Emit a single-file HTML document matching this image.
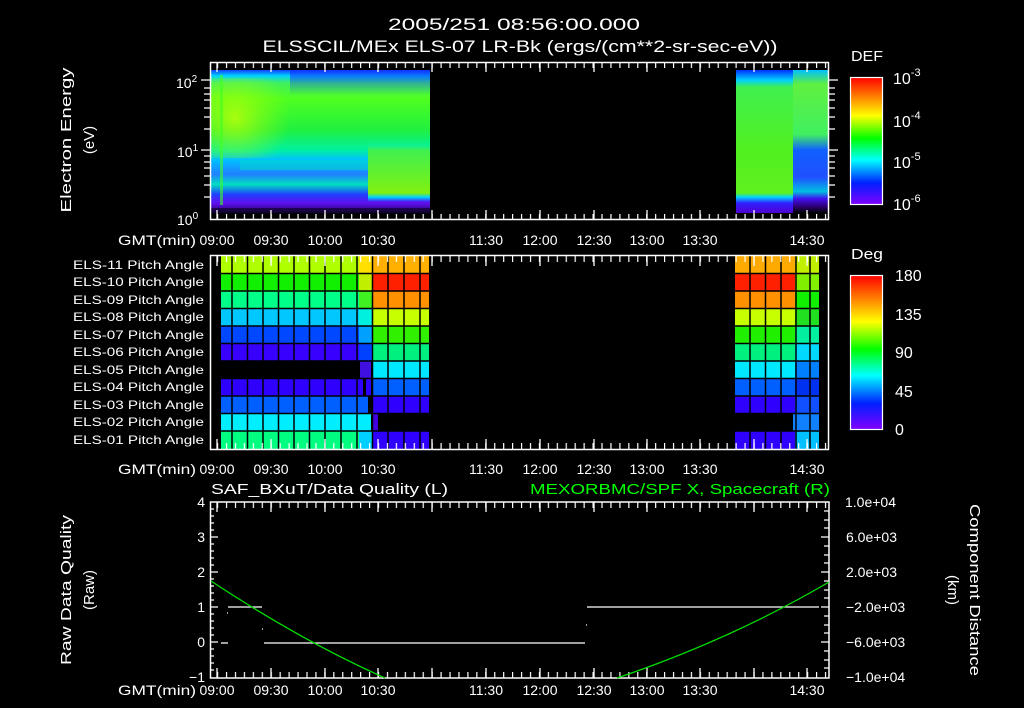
<!DOCTYPE html>
<html><head><meta charset="utf-8"><style>
html,body{margin:0;padding:0;background:#000;}
svg{display:block}
text{font-family:"Liberation Sans",sans-serif;fill:#fff;}
</style></head><body>
<svg width="1024" height="708" viewBox="0 0 1024 708" xmlns="http://www.w3.org/2000/svg">
<defs>
<linearGradient id="cb" x1="0" y1="0" x2="0" y2="1">
<stop offset="0" stop-color="#ff0000"/><stop offset="0.15" stop-color="#ff8000"/><stop offset="0.3" stop-color="#ffff00"/><stop offset="0.48" stop-color="#00ff00"/><stop offset="0.65" stop-color="#00ffff"/><stop offset="0.83" stop-color="#0020ff"/><stop offset="1" stop-color="#8000ff"/>
</linearGradient>
<linearGradient id="sl" x1="0" y1="70" x2="0" y2="213" gradientUnits="userSpaceOnUse">
<stop offset="0" stop-color="#1040ff"/><stop offset="0.04" stop-color="#00d0ff"/><stop offset="0.09" stop-color="#40f060"/><stop offset="0.2" stop-color="#50ff20"/><stop offset="0.42" stop-color="#20f040"/><stop offset="0.56" stop-color="#00f0a0"/><stop offset="0.63" stop-color="#00c0ff"/><stop offset="0.73" stop-color="#2080ff"/><stop offset="0.8" stop-color="#00e0c0"/><stop offset="0.87" stop-color="#2040ff"/><stop offset="0.93" stop-color="#6010f0"/><stop offset="1" stop-color="#200060"/>
</linearGradient>
<linearGradient id="gr" x1="0" y1="70" x2="0" y2="213" gradientUnits="userSpaceOnUse">
<stop offset="0" stop-color="#0030ff"/><stop offset="0.07" stop-color="#00d0ff"/><stop offset="0.12" stop-color="#40f050"/><stop offset="0.55" stop-color="#50f020"/><stop offset="0.86" stop-color="#60f020"/><stop offset="0.89" stop-color="#00d0ff"/><stop offset="0.93" stop-color="#3020ff"/><stop offset="1" stop-color="#5000d0"/>
</linearGradient>
<linearGradient id="gr2" x1="0" y1="70" x2="0" y2="213" gradientUnits="userSpaceOnUse">
<stop offset="0" stop-color="#00c0ff"/><stop offset="0.1" stop-color="#60f040"/><stop offset="0.45" stop-color="#40f060"/><stop offset="0.56" stop-color="#1060ff"/><stop offset="0.75" stop-color="#2050ff"/><stop offset="0.85" stop-color="#00c0e0"/><stop offset="0.9" stop-color="#4010f0"/><stop offset="0.95" stop-color="#300080"/><stop offset="1" stop-color="#000"/>
</linearGradient>
<linearGradient id="mid" x1="0" y1="70" x2="0" y2="213" gradientUnits="userSpaceOnUse">
<stop offset="0.5" stop-color="#00f0c0" stop-opacity="0"/><stop offset="0.56" stop-color="#40f050"/><stop offset="0.86" stop-color="#80f010"/><stop offset="0.89" stop-color="#00d0ff"/><stop offset="0.92" stop-color="#00d0ff" stop-opacity="0"/>
</linearGradient>
<linearGradient id="midh" x1="0" y1="0" x2="1" y2="0">
<stop offset="0" stop-color="#fff" stop-opacity="0"/><stop offset="0.25" stop-color="#fff" stop-opacity="1"/>
</linearGradient>
<radialGradient id="yl" cx="0.3" cy="0.5" r="0.7">
<stop offset="0" stop-color="#d0ff00" stop-opacity="0.75"/><stop offset="1" stop-color="#a0ff00" stop-opacity="0"/>
</radialGradient>
<linearGradient id="tb" x1="0" y1="0" x2="0" y2="1">
<stop offset="0" stop-color="#1030ff" stop-opacity="0.7"/><stop offset="1" stop-color="#1030ff" stop-opacity="0"/>
</linearGradient>
<pattern id="tx" patternUnits="userSpaceOnUse" x="217" y="0" width="8.94" height="708"><rect x="0" y="0" width="1.2" height="708" fill="#fff"/></pattern>
</defs>

<text x="514" y="30" font-size="17" text-anchor="middle" textLength="252" lengthAdjust="spacingAndGlyphs">2005/251 08:56:00.000</text>
<text x="520" y="52" font-size="17" text-anchor="middle" textLength="515" lengthAdjust="spacingAndGlyphs">ELSSCIL/MEx ELS-07 LR-Bk  (ergs/(cm**2-sr-sec-eV))</text>

<!-- PANEL 1 -->
<rect x="211" y="70" width="219" height="143" fill="url(#sl)"/>
<rect x="211" y="78" width="80" height="80" fill="url(#yl)"/>
<rect x="290" y="70" width="140" height="25" fill="url(#tb)"/>
<rect x="240" y="160" width="130" height="10" fill="#00e0c0" opacity="0.45"/>
<rect x="368" y="70" width="62" height="143" fill="url(#mid)"/>
<rect x="220" y="75" width="3" height="130" fill="#40ff20" opacity="0.6"/>
<rect x="736" y="70" width="57" height="143" fill="url(#gr)"/>
<rect x="793" y="70" width="36" height="143" fill="url(#gr2)"/>
<rect x="211" y="208" width="219" height="5" fill="#000" opacity="0.5"/>
<rect x="210.5" y="62.5" width="618" height="157" fill="none" stroke="#fff" stroke-width="1.5"/>
<rect x="211" y="62" width="618" height="6" fill="url(#tx)"/>
<rect x="211" y="214" width="618" height="6" fill="url(#tx)"/>
<g stroke="#fff" stroke-width="1.3">
<path d="M217 62v10M271 62v10M325 62v10M378 62v10M432 62v10M486 62v10M540 62v10M594 62v10M647 62v10M700 62v10M754 62v10M807 62v10"/>
<path d="M217 220v-10M271 220v-10M325 220v-10M378 220v-10M432 220v-10M486 220v-10M540 220v-10M594 220v-10M647 220v-10M700 220v-10M754 220v-10M807 220v-10"/>
<path d="M201 80h9M201 150h9M204 197h6M204 185h6M204 176h6M204 168h6M204 162h6M204 156h6M204 129h6M204 117h6M204 108h6M204 100h6M204 94h6M204 88h6"/>
<path d="M829 80h9M829 150h9M829 197h6M829 185h6M829 176h6M829 168h6M829 162h6M829 156h6M829 129h6M829 117h6M829 108h6M829 100h6M829 94h6M829 88h6"/>
</g>
<text x="176" y="88" font-size="14">10<tspan dy="-6" font-size="10">2</tspan></text>
<text x="177" y="157" font-size="14">10<tspan dy="-6" font-size="10">1</tspan></text>
<text x="177" y="225" font-size="14">10<tspan dy="-6" font-size="10">0</tspan></text>
<text transform="translate(71,140) rotate(-90)" font-size="15" text-anchor="middle" textLength="145" lengthAdjust="spacingAndGlyphs">Electron Energy</text>
<text transform="translate(94,140) rotate(-90)" font-size="15" text-anchor="middle">(eV)</text>
<text x="851" y="61" font-size="15" textLength="32" lengthAdjust="spacingAndGlyphs">DEF</text>
<rect x="850.5" y="77.5" width="32" height="127" fill="url(#cb)" stroke="#fff" stroke-width="1.2"/>
<text x="893" y="84" font-size="16">10<tspan dy="-8" font-size="11">-3</tspan></text>
<text x="893" y="127" font-size="16">10<tspan dy="-8" font-size="11">-4</tspan></text>
<text x="893" y="168" font-size="16">10<tspan dy="-8" font-size="11">-5</tspan></text>
<text x="893" y="210" font-size="16">10<tspan dy="-8" font-size="11">-6</tspan></text>
<g font-size="14" text-anchor="middle">
<text x="157" y="245" textLength="78" lengthAdjust="spacingAndGlyphs">GMT(min)</text>
<text x="217" y="245">09:00</text><text x="271" y="245">09:30</text><text x="325" y="245">10:00</text><text x="378" y="245">10:30</text><text x="486" y="245">11:30</text><text x="540" y="245">12:00</text><text x="594" y="245">12:30</text><text x="647" y="245">13:00</text><text x="700" y="245">13:30</text><text x="807" y="245">14:30</text>
</g>

<!-- PANEL 2 -->
<g>
<rect x="221" y="256" width="150" height="18" fill="#b0ff00"/>
<rect x="221" y="273" width="150" height="18" fill="#10f000"/>
<rect x="221" y="291" width="150" height="18" fill="#00ff88"/>
<rect x="221" y="308" width="150" height="18" fill="#00c8ff"/>
<rect x="221" y="326" width="150" height="18" fill="#0048ff"/>
<rect x="221" y="343" width="150" height="18" fill="#3800ff"/>
<rect x="360" y="361" width="11" height="18" fill="#4010e0"/>
<rect x="221" y="378" width="150" height="18" fill="#3000ff"/>
<rect x="221" y="396" width="150" height="18" fill="#0060ff"/>
<rect x="221" y="414" width="150" height="18" fill="#00eeff"/>
<rect x="221" y="431" width="150" height="18" fill="#00ff80"/>
<rect x="359" y="256" width="14" height="18" fill="#ffe000"/>
<rect x="359" y="273" width="14" height="18" fill="#c0f000"/>
<rect x="359" y="291" width="14" height="18" fill="#40f020"/>
<rect x="359" y="308" width="14" height="18" fill="#00f0e0"/>
<rect x="359" y="326" width="14" height="18" fill="#00a0ff"/>
<rect x="359" y="343" width="14" height="18" fill="#0040ff"/>
<rect x="359" y="431" width="14" height="18" fill="#00d0ff"/>
<rect x="372" y="256" width="57" height="18" fill="#ffb000"/>
<rect x="372" y="273" width="57" height="18" fill="#ff2000"/>
<rect x="372" y="291" width="57" height="18" fill="#ff9000"/>
<rect x="372" y="308" width="57" height="18" fill="#c8ff00"/>
<rect x="372" y="326" width="57" height="18" fill="#30f000"/>
<rect x="372" y="343" width="57" height="18" fill="#00f080"/>
<rect x="372" y="361" width="57" height="18" fill="#00e8ff"/>
<rect x="372" y="378" width="57" height="18" fill="#0060ff"/>
<rect x="372" y="396" width="57" height="18" fill="#3000ff"/>
<rect x="372" y="414" width="6" height="18" fill="#4000e0"/>
<rect x="372" y="431" width="57" height="18" fill="#3000ff"/>
<rect x="363" y="378" width="3" height="18" fill="#000"/>
<rect x="368" y="396" width="4" height="18" fill="#000"/>
<rect x="735" y="256" width="60" height="18" fill="#ffaa00"/><rect x="795" y="256" width="24" height="18" fill="#c0f000"/>
<rect x="735" y="273" width="60" height="18" fill="#ff2000"/><rect x="795" y="273" width="24" height="18" fill="#80f000"/>
<rect x="735" y="291" width="60" height="18" fill="#ff9000"/><rect x="795" y="291" width="24" height="18" fill="#10f000"/>
<rect x="735" y="308" width="84" height="18" fill="#c8ff00"/><rect x="795" y="308" width="24" height="18" fill="#20e020"/>
<rect x="735" y="326" width="84" height="18" fill="#20f000"/><rect x="795" y="326" width="24" height="18" fill="#00f0a0"/>
<rect x="735" y="343" width="84" height="18" fill="#00f080"/><rect x="795" y="343" width="24" height="18" fill="#00d8ff"/>
<rect x="735" y="361" width="84" height="18" fill="#00e8ff"/><rect x="795" y="361" width="24" height="18" fill="#0080ff"/>
<rect x="735" y="378" width="84" height="18" fill="#0060ff"/><rect x="795" y="378" width="24" height="18" fill="#0030f0"/>
<rect x="735" y="396" width="84" height="18" fill="#3000ff"/><rect x="795" y="396" width="24" height="18" fill="#1050ff"/>
<rect x="793" y="414" width="26" height="18" fill="#1080ff"/>
<rect x="735" y="431" width="84" height="18" fill="#3000ff"/><rect x="795" y="431" width="24" height="18" fill="#00c0ff"/>
<g stroke="#000" stroke-width="1.5">
<path d="M232 256v193M247.5 256v193M263 256v193M278.5 256v193M294 256v193M309.5 256v193M325 256v193M341 256v193M357 256v193M372.5 256v193M388 256v193M404 256v193M420 256v193"/>
<path d="M750 256v193M765.5 256v193M781 256v193M796 256v193M810 256v193"/>
<path d="M211 273.5h618M211 291h618M211 308.5h618M211 326h618M211 343.5h618M211 361h618M211 378.5h618M211 396h618M211 413.5h618M211 431h618"/>
</g>
</g>
<rect x="210.5" y="255.5" width="618" height="194" fill="none" stroke="#fff" stroke-width="1.5"/>
<rect x="211" y="256" width="618" height="6" fill="url(#tx)"/>
<rect x="211" y="443" width="618" height="6" fill="url(#tx)"/>
<g stroke="#fff" stroke-width="1.3">
<path d="M217 256v10M271 256v10M325 256v10M378 256v10M432 256v10M486 256v10M540 256v10M594 256v10M647 256v10M700 256v10M754 256v10M807 256v10"/>
<path d="M217 449v-10M271 449v-10M325 449v-10M378 449v-10M432 449v-10M486 449v-10M540 449v-10M594 449v-10M647 449v-10M700 449v-10M754 449v-10M807 449v-10"/>
</g>
<g font-size="12" text-anchor="end">
<text x="204" y="269" textLength="131" lengthAdjust="spacingAndGlyphs">ELS-11 Pitch Angle</text>
<text x="204" y="286" textLength="131" lengthAdjust="spacingAndGlyphs">ELS-10 Pitch Angle</text>
<text x="204" y="304" textLength="131" lengthAdjust="spacingAndGlyphs">ELS-09 Pitch Angle</text>
<text x="204" y="321" textLength="131" lengthAdjust="spacingAndGlyphs">ELS-08 Pitch Angle</text>
<text x="204" y="339" textLength="131" lengthAdjust="spacingAndGlyphs">ELS-07 Pitch Angle</text>
<text x="204" y="356" textLength="131" lengthAdjust="spacingAndGlyphs">ELS-06 Pitch Angle</text>
<text x="204" y="374" textLength="131" lengthAdjust="spacingAndGlyphs">ELS-05 Pitch Angle</text>
<text x="204" y="391" textLength="131" lengthAdjust="spacingAndGlyphs">ELS-04 Pitch Angle</text>
<text x="204" y="409" textLength="131" lengthAdjust="spacingAndGlyphs">ELS-03 Pitch Angle</text>
<text x="204" y="426" textLength="131" lengthAdjust="spacingAndGlyphs">ELS-02 Pitch Angle</text>
<text x="204" y="444" textLength="131" lengthAdjust="spacingAndGlyphs">ELS-01 Pitch Angle</text>
</g>
<text x="851" y="259" font-size="15" textLength="32" lengthAdjust="spacingAndGlyphs">Deg</text>
<rect x="850.5" y="275.5" width="32" height="154" fill="url(#cb)" stroke="#fff" stroke-width="1.2"/>
<g font-size="16">
<text x="895" y="281">180</text><text x="895" y="320">135</text><text x="895" y="358">90</text><text x="895" y="397">45</text><text x="895" y="435">0</text>
</g>
<g font-size="14" text-anchor="middle">
<text x="157" y="474" textLength="78" lengthAdjust="spacingAndGlyphs">GMT(min)</text>
<text x="217" y="474">09:00</text><text x="271" y="474">09:30</text><text x="325" y="474">10:00</text><text x="378" y="474">10:30</text><text x="486" y="474">11:30</text><text x="540" y="474">12:00</text><text x="594" y="474">12:30</text><text x="647" y="474">13:00</text><text x="700" y="474">13:30</text><text x="807" y="474">14:30</text>
</g>

<!-- PANEL 3 -->
<text x="211" y="494" font-size="15" textLength="237" lengthAdjust="spacingAndGlyphs">SAF_BXuT/Data Quality (L)</text>
<text x="530" y="494" font-size="15" style="fill:#00ff00" textLength="300" lengthAdjust="spacingAndGlyphs">MEXORBMC/SPF X, Spacecraft (R)</text>
<rect x="210.5" y="502" width="618.5" height="176" fill="none" stroke="#fff" stroke-width="1.5"/>
<rect x="211" y="502" width="618" height="6" fill="url(#tx)"/>
<rect x="211" y="672" width="618" height="6" fill="url(#tx)"/>
<g stroke="#fff" stroke-width="1.3">
<path d="M217 502v10M271 502v10M325 502v10M378 502v10M432 502v10M486 502v10M540 502v10M594 502v10M647 502v10M700 502v10M754 502v10M807 502v10"/>
<path d="M217 678v-10M271 678v-10M325 678v-10M378 678v-10M432 678v-10M486 678v-10M540 678v-10M594 678v-10M647 678v-10M700 678v-10M754 678v-10M807 678v-10"/>
<path d="M210 537h8M210 572h8M210 607h8M210 642h8M210 509h4M210 516h4M210 523h4M210 530h4M210 544h4M210 551h4M210 558h4M210 565h4M210 579h4M210 586h4M210 593h4M210 600h4M210 614h4M210 621h4M210 628h4M210 635h4M210 649h4M210 656h4M210 663h4M210 670h4"/>
<path d="M829 537h-8M829 572h-8M829 607h-8M829 642h-8M829 511h-5M829 520h-5M829 528h-5M829 546h-5M829 555h-5M829 563h-5M829 581h-5M829 590h-5M829 598h-5M829 616h-5M829 625h-5M829 633h-5M829 651h-5M829 660h-5M829 668h-5"/>
</g>
<g font-size="14" text-anchor="end">
<text x="205" y="507">4</text><text x="205" y="542">3</text><text x="205" y="577">2</text><text x="205" y="612">1</text><text x="205" y="647">0</text><text x="205" y="682">−1</text>
</g>
<g font-size="14">
<text x="845" y="507">1.0e+04</text><text x="846" y="542">6.0e+03</text><text x="846" y="577">2.0e+03</text><text x="846" y="612">−2.0e+03</text><text x="846" y="647">−6.0e+03</text><text x="846" y="682">−1.0e+04</text>
</g>
<text transform="translate(71,590) rotate(-90)" font-size="15" text-anchor="middle" textLength="150" lengthAdjust="spacingAndGlyphs">Raw Data Quality</text>
<text transform="translate(94,590) rotate(-90)" font-size="15" text-anchor="middle">(Raw)</text>
<text transform="translate(970,590) rotate(90)" font-size="15" text-anchor="middle" textLength="172" lengthAdjust="spacingAndGlyphs">Component Distance</text>
<text transform="translate(948,590) rotate(90)" font-size="15" text-anchor="middle">(km)</text>
<g stroke="#fff" stroke-width="1.2">
<path d="M228 607h34M587 607h232M221 643h7M264 643h321"/>
<path d="M227 613h1M262 629h1M586 625h1"/>
</g>
<path d="M211 581 Q300 640 385 678" fill="none" stroke="#00e000" stroke-width="1.3"/>
<path d="M617 678 Q730 640 829 582" fill="none" stroke="#00e000" stroke-width="1.3"/>
<g font-size="14" text-anchor="middle">
<text x="157" y="695" textLength="78" lengthAdjust="spacingAndGlyphs">GMT(min)</text>
<text x="217" y="695">09:00</text><text x="271" y="695">09:30</text><text x="325" y="695">10:00</text><text x="378" y="695">10:30</text><text x="486" y="695">11:30</text><text x="540" y="695">12:00</text><text x="594" y="695">12:30</text><text x="647" y="695">13:00</text><text x="700" y="695">13:30</text><text x="807" y="695">14:30</text>
</g>
</svg>
</body></html>
